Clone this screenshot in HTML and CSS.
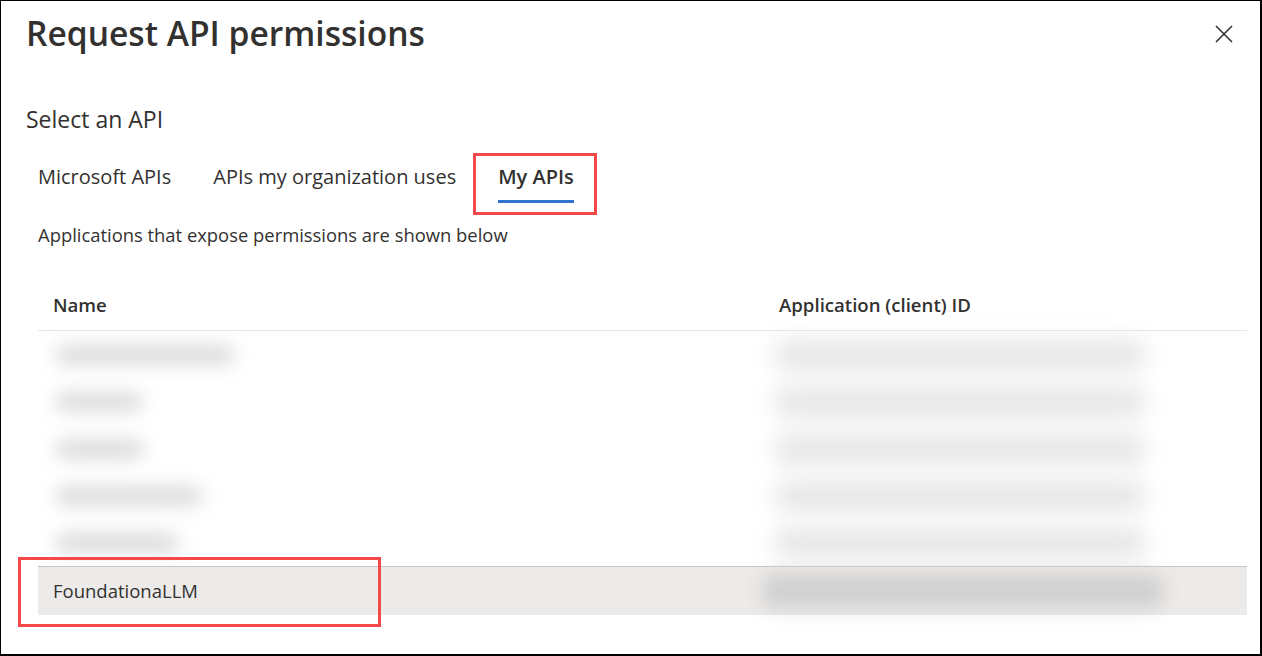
FILE: index.html
```html
<!DOCTYPE html>
<html lang="en">
<head>
<meta charset="utf-8">
<title>Request API permissions</title>
<link rel="stylesheet" href="styles.css">
</head>
<body>
<div class="dialog">
  <header class="head">
    <h1 class="title">Request API permissions</h1>
    <button class="close" aria-label="Close">
      <svg width="18" height="18" viewBox="0 0 18 18"><path d="M1 1 L17 17 M17 1 L1 17" stroke="#323130" stroke-width="1.6" fill="none"/></svg>
    </button>
  </header>

  <div class="label">Select an API</div>

  <nav class="tabs">
    <div class="tab"><span class="tab-text">Microsoft APIs</span></div>
    <div class="tab"><span class="tab-text">APIs my organization uses</span></div>
    <div class="tab active"><span class="tab-text">My APIs<span class="callout callout-tab"></span></span></div>
  </nav>

  <p class="desc">Applications that expose permissions are shown below</p>

  <div class="table">
    <div class="thead">
      <div class="cell c-name">Name</div>
      <div class="cell c-id">Application (client) ID</div>
    </div>
    <div class="row">
      <div class="cell c-name"><span class="blur" style="width:180px"></span></div>
      <div class="cell c-id"><span class="blur blur-id"></span></div>
    </div>
    <div class="row">
      <div class="cell c-name"><span class="blur" style="width:88px"></span></div>
      <div class="cell c-id"><span class="blur blur-id"></span></div>
    </div>
    <div class="row">
      <div class="cell c-name"><span class="blur" style="width:90px"></span></div>
      <div class="cell c-id"><span class="blur blur-id"></span></div>
    </div>
    <div class="row">
      <div class="cell c-name"><span class="blur" style="width:148px"></span></div>
      <div class="cell c-id"><span class="blur blur-id"></span></div>
    </div>
    <div class="row">
      <div class="cell c-name"><span class="blur" style="width:124px"></span></div>
      <div class="cell c-id"><span class="blur blur-id"></span></div>
    </div>
    <div class="row selected">
      <div class="cell c-name">FoundationaLLM</div>
      <div class="cell c-id"><span class="blur blur-sel"></span></div>
      <span class="callout callout-row"></span>
    </div>
  </div>
</div>
</body>
</html>
```

FILE: styles.css
```css
* { box-sizing: border-box; }

html, body {
  margin: 0;
  padding: 0;
  background: #ffffff;
}

body {
  font-family: "Open Sans", "Noto Sans", sans-serif;
  color: #323130;
}

.dialog {
  width: 1262px;
  height: 656px;
  border-style: solid;
  border-color: #000000;
  border-width: 1px 2px 2px 1px;
  padding: 0 13px 0 25px;
  overflow: hidden;
}

.head {
  display: flex;
  justify-content: space-between;
  align-items: flex-start;
  padding: 10px 14px 0 0;
}

.title {
  margin: 0;
  font-size: 33.6px;
  line-height: 44px;
  font-weight: 600;
  color: #323130;
}

.close {
  margin-top: 14px;
  padding: 0;
  border: 0;
  background: transparent;
  width: 18px;
  height: 18px;
  display: flex;
}

.label {
  margin-top: 49px;
  font-size: 23px;
  line-height: 30px;
}

.tabs {
  display: flex;
  margin-top: 29px;
  gap: 18px;
}

.tab {
  padding: 0 12px;
  font-size: 20px;
  line-height: 28px;
}

.tab-text {
  position: relative;
  display: block;
  padding-bottom: 9px;
  border-bottom: 3px solid transparent;
}

.tab.active .tab-text {
  font-weight: 600;
  border-bottom-color: #2f74d0;
}

.desc {
  margin: 19px 0 0 12px;
  font-size: 18.4px;
  line-height: 26px;
}

.table {
  margin: 20px 0 0 12px;
}

.thead {
  display: flex;
  padding: 24px 0 12px;
  border-bottom: 1px solid #e8e6e4;
  font-size: 18.6px;
  line-height: 26px;
  font-weight: 600;
}

.cell {
  padding-left: 15px;
  display: flex;
  align-items: center;
}

.c-name { width: 726px; }
.c-id { flex: 1; }

.row {
  display: flex;
  height: 47px;
  font-size: 18.5px;
  line-height: 26px;
  position: relative;
}

.blur {
  display: block;
  height: 20px;
  background: #dcdcdc;
  border-radius: 10px;
  filter: blur(9px);
  margin-left: 2px;
}

.blur-id {
  width: 370px;
  height: 30px;
  margin-left: -4px;
  background: #e6e6e6;
  filter: blur(11px);
}

.row.selected {
  height: 49px;
  border-top: 1px solid #c8c6c4;
  background: #edebe9;
}

.blur-sel {
  width: 400px;
  height: 34px;
  margin-left: -16px;
  background: #d0d0d0;
  filter: blur(9px);
}

.callout {
  position: absolute;
  border: 3px solid #f24a4a;
  pointer-events: none;
}

.callout-tab {
  left: -25px;
  top: -10px;
  width: 124px;
  height: 62px;
}

.callout-row {
  left: -20px;
  top: -10px;
  width: 363px;
  height: 70px;
}
```
